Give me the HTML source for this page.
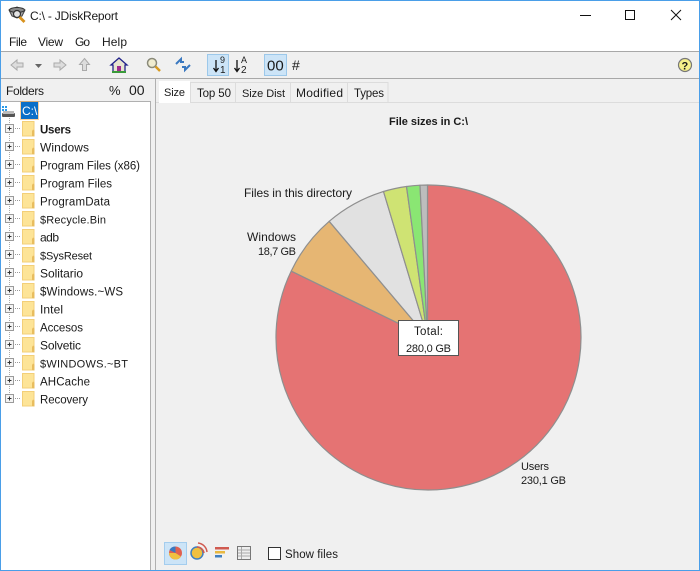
<!DOCTYPE html>
<html><head><meta charset="utf-8"><title>C:\ - JDiskReport</title>
<style>
html,body{margin:0;padding:0;background:#f0f0f0;width:700px;height:571px;overflow:hidden}
svg{display:block;font-family:"Liberation Sans",sans-serif;font-size:12px;fill:#1a1a1a}
</style></head><body>
<svg width="700" height="571" viewBox="0 0 700 571" xmlns="http://www.w3.org/2000/svg">
<defs>
<g id="row">
<rect x="5.500" y="-4.500" width="8" height="8" fill="#f4f4f4" stroke="#9a9a9a"/>
<path d="M7.500 -.5h4M9.500 -2.500v4" stroke="#333" fill="none"/>
<path d="M15 -.5h5" stroke="#999" stroke-dasharray="1 1" fill="none"/>
<path d="M22.500 -7.500h11.500v14.500H22.500z" fill="#fde497" stroke="#f3cf78"/>
<path d="M32 7V2l1-1.500 1.500 1v6z" fill="#e8bd5e"/>
</g>
</defs>
<rect width="700" height="571" fill="#f0f0f0"/>
<rect x="0" y="0" width="700" height="51" fill="#fff"/>
<rect x="0" y="51" width="700" height="1" fill="#a8a8a8"/>
<rect x="0" y="78" width="700" height="1" fill="#a8a8a8"/>

<!-- title icon -->
<path d="M9 10l8-3 8 3-3 6-5 2-5-2z" fill="#a8a8a8" stroke="#444"/>
<ellipse cx="17" cy="10" rx="7.500" ry="2.500" fill="#8a8a8a" stroke="#333"/>
<circle cx="17" cy="14" r="3.500" fill="#e4e4e4" stroke="#333" stroke-width="1.200"/>
<path d="M19.500 17l5 5" stroke="#d8921e" stroke-width="2.800"/>
<text x="30" y="20" textLength="88" lengthAdjust="spacing">C:\ - JDiskReport</text>
<!-- window buttons -->
<path d="M580 15.500h11" stroke="#111"/>
<rect x="625.500" y="10.500" width="9" height="9" fill="none" stroke="#111"/>
<path d="M671 10l10 10M681 10l-10 10" stroke="#111" fill="none"/>
<!-- menu -->
<text x="9" y="46" textLength="18">File</text><text x="38" y="46" textLength="25">View</text><text x="75" y="46" textLength="15">Go</text><text x="102" y="46" textLength="25">Help</text>

<!-- toolbar -->
<path d="M11 65l6-5v3h6v4h-6v3z" fill="#ddd" stroke="#aaa"/>
<path d="M35 64h7l-3.500 4z" fill="#666"/>
<path d="M66 65l-6-5v3h-6v4h6v3z" fill="#ddd" stroke="#aaa"/>
<path d="M84.500 58.500l5 6h-3v6h-4v-6h-3z" fill="#ddd" stroke="#aaa"/>
<path d="M119 58l8 7h-2v7h-12v-7h-2z" fill="#e8e4d0" stroke="#22228a" stroke-width="1.300"/>
<rect x="117" y="66" width="4" height="6" fill="#a02a90"/>
<path d="M112 72h14" stroke="#3a9a3a" stroke-width="2"/>
<circle cx="152" cy="63" r="4.500" fill="#f0ecd0" stroke="#8a8a7a" stroke-width="1.500"/>
<path d="M155.500 66.500l4.500 4.500" stroke="#d89a20" stroke-width="2.500"/>
<path d="M176 64l5-5v3h3M190 65l-5 5v-3h-3" stroke="#3a78c0" stroke-width="2" fill="none"/>
<rect x="207.500" y="54.500" width="21" height="21" fill="#cce4f7" stroke="#9cc8ea"/>
<path d="M216 60v11M213.500 68l2.500 3.500 2.500-3.500" stroke="#111" stroke-width="1.300" fill="none"/>
<text x="220" y="63" font-size="9">9</text><text x="220" y="73" font-size="10">1</text>
<path d="M237 60v11M234.500 68l2.500 3.500 2.500-3.500" stroke="#111" stroke-width="1.300" fill="none"/>
<text x="241" y="63" font-size="9">A</text><text x="241" y="73" font-size="10">2</text>
<rect x="264.500" y="54.500" width="22" height="21" fill="#cce4f7" stroke="#9cc8ea"/>
<text x="267" y="70.500" font-size="15">00</text>
<text x="292" y="70" font-size="14">#</text>
<circle cx="685" cy="65" r="6.500" fill="#f6f08a" stroke="#777" stroke-width="1.200"/>
<text x="681.500" y="69.500" font-size="11" font-weight="bold">?</text>

<!-- left panel -->
<rect x="1" y="79" width="149" height="22" fill="#f0f0f0"/>
<text x="6" y="95" textLength="38">Folders</text>
<text x="109" y="95" font-size="13" textLength="12">%</text><text x="129" y="95" font-size="14">00</text>
<rect x="0.500" y="101.500" width="150" height="469" fill="#fff" stroke="#b0b0b0"/>
<rect x="155" y="79" width="1" height="492" fill="#b0b0b0"/>
<path d="M9.500 118V402" stroke="#aaa" stroke-dasharray="1 1" fill="none"/>

<!-- drive -->
<rect x="2" y="106" width="2" height="2" fill="#2a9ae8"/><rect x="5" y="106" width="2" height="2" fill="#2a9ae8"/><rect x="2" y="109" width="2" height="2" fill="#2a9ae8"/><rect x="5" y="109" width="2" height="2" fill="#2a9ae8"/>
<rect x="2" y="113" width="13" height="4" rx="1" fill="#555"/>
<rect x="3" y="111" width="11" height="3" fill="#bbb"/>
<rect x="21" y="102" width="17" height="17" fill="#0a6fc8"/>
<rect x="20.500" y="101.500" width="18" height="18" fill="none" stroke="#f0a040" stroke-dasharray="1 1"/>
<text x="22" y="115" style="fill:#fff">C:\</text>

<!-- tree -->
<use href="#row" y="129"/><text x="40" y="133.500" font-weight="bold" font-size="11.500" textLength="31">Users</text>
<use href="#row" y="147"/><text x="40" y="151.500" textLength="49">Windows</text>
<use href="#row" y="165"/><text x="40" y="169.500" font-size="11.500" textLength="100">Program Files (x86)</text>
<use href="#row" y="183"/><text x="40" y="187.500" font-size="11.500" textLength="72">Program Files</text>
<use href="#row" y="201"/><text x="40" y="205.500" font-size="11.500" textLength="70">ProgramData</text>
<use href="#row" y="219"/><text x="40" y="223.500" font-size="11" textLength="66">$Recycle.Bin</text>
<use href="#row" y="237"/><text x="40" y="241.500" textLength="19">adb</text>
<use href="#row" y="255"/><text x="40" y="259.500" font-size="11" textLength="52">$SysReset</text>
<use href="#row" y="273"/><text x="40" y="277.500" textLength="43">Solitario</text>
<use href="#row" y="291"/><text x="40" y="295.500" font-size="11.500" textLength="83">$Windows.~WS</text>
<use href="#row" y="309"/><text x="40" y="313.500" textLength="23">Intel</text>
<use href="#row" y="327"/><text x="40" y="331.500" font-size="11.500" textLength="43">Accesos</text>
<use href="#row" y="345"/><text x="40" y="349.500" textLength="41">Solvetic</text>
<use href="#row" y="363"/><text x="40" y="367.500" font-size="11" textLength="88">$WINDOWS.~BT</text>
<use href="#row" y="381"/><text x="40" y="385.500" font-size="11.500" textLength="50">AHCache</text>
<use href="#row" y="399"/><text x="40" y="403.500" font-size="11.500" textLength="48">Recovery</text>

<!-- tabs -->
<path d="M156 102.500H700" stroke="#dcdcdc"/>
<path d="M190.500 102V82.500H235.500V102M235.500 82.500H290.500V102M290.500 82.500H347.500V102M347.500 82.500H388V102" fill="none" stroke="#dcdcdc"/>
<rect x="159" y="81" width="31" height="22" fill="#fff"/>
<text x="164" y="96" font-size="11" textLength="21">Size</text>
<text x="197" y="97" font-size="11.500" textLength="34">Top 50</text>
<text x="242" y="97" font-size="11" textLength="43">Size Dist</text>
<text x="296" y="97" textLength="47">Modified</text>
<text x="354" y="97" font-size="11.500" textLength="30">Types</text>

<text x="389" y="125" font-weight="bold" font-size="11" textLength="79">File sizes in C:\</text>

<!-- pie -->
<g stroke="#8f8f8f" stroke-width="1.200" stroke-linejoin="round" transform="translate(-0.500 0)">
<path d="M428 337.500L428 185A152.500 152.500 0 1 1 291.700 271.100Z" fill="#e57373"/>
<path d="M428 337.500L291.700 271.100A152.500 152.500 0 0 1 329.700 221.300Z" fill="#e6b673"/>
<path d="M428 337.500L329.700 221.300A152.500 152.500 0 0 1 384 191.500Z" fill="#e1e1e1"/>
<path d="M428 337.500L384 191.500A152.500 152.500 0 0 1 407 186.500Z" fill="#cfe373"/>
<path d="M428 337.500L407 186.500A152.500 152.500 0 0 1 420.500 185.200Z" fill="#8ae673"/>
<path d="M428 337.500L420.500 185.200A152.500 152.500 0 0 1 428 185Z" fill="#bdbdbd"/>
</g>
<text x="244" y="197" textLength="108">Files in this directory</text>
<text x="247" y="241" textLength="49">Windows</text>
<text x="258" y="255" font-size="11" textLength="38">18,7 GB</text>
<text x="521" y="470" font-size="11" textLength="28">Users</text>
<text x="521" y="484" font-size="11" textLength="45">230,1 GB</text>
<rect x="398.500" y="320.500" width="60" height="35" fill="#fff" stroke="#555"/>
<text x="414" y="335" font-size="11.500" textLength="29">Total:</text>
<text x="406" y="352" font-size="11" textLength="45">280,0 GB</text>

<!-- bottom toolbar -->
<rect x="164.500" y="542.500" width="22" height="22" fill="#cce4f7" stroke="#a4cdee"/>
<circle cx="175.500" cy="553" r="6.500" fill="#e06050"/>
<path d="M175.500 553h-6.500a6.500 6.500 0 0 0 12 3.500z" fill="#f0c040"/>
<path d="M175.500 553l-6-3a6.500 6.500 0 0 1 6-3.500z" fill="#3a78c0"/>
<circle cx="197" cy="553" r="6" fill="#f0c040" stroke="#4080c0" stroke-width="1.500"/>
<path d="M197 547a7 7 0 0 1 7 6M198 543a10 10 0 0 1 9 9" stroke="#d05a50" stroke-width="1.500" fill="none"/>
<rect x="215" y="547" width="14" height="2.500" fill="#d05a50"/>
<rect x="215" y="551" width="10" height="2.500" fill="#e8b840"/>
<rect x="215" y="555" width="7" height="2.500" fill="#4080c0"/>
<rect x="237.500" y="546.500" width="13" height="13" fill="#eee" stroke="#777"/>
<path d="M238 550h12M238 553h12M238 556h12M241.500 547v12" stroke="#aaa" fill="none"/>
<rect x="268.500" y="547.500" width="12" height="12" fill="#fff" stroke="#333"/>
<text x="285" y="558" font-size="11.500" textLength="53">Show files</text>

<!-- window border -->
<rect x="0" y="0" width="700" height="1" fill="#4a9ee8"/>
<rect x="0" y="570" width="700" height="1" fill="#4a9ee8"/>
<rect x="0" y="0" width="1" height="571" fill="#4a9ee8"/>
<rect x="699" y="0" width="1" height="571" fill="#4a9ee8"/>
</svg>
</body></html>
